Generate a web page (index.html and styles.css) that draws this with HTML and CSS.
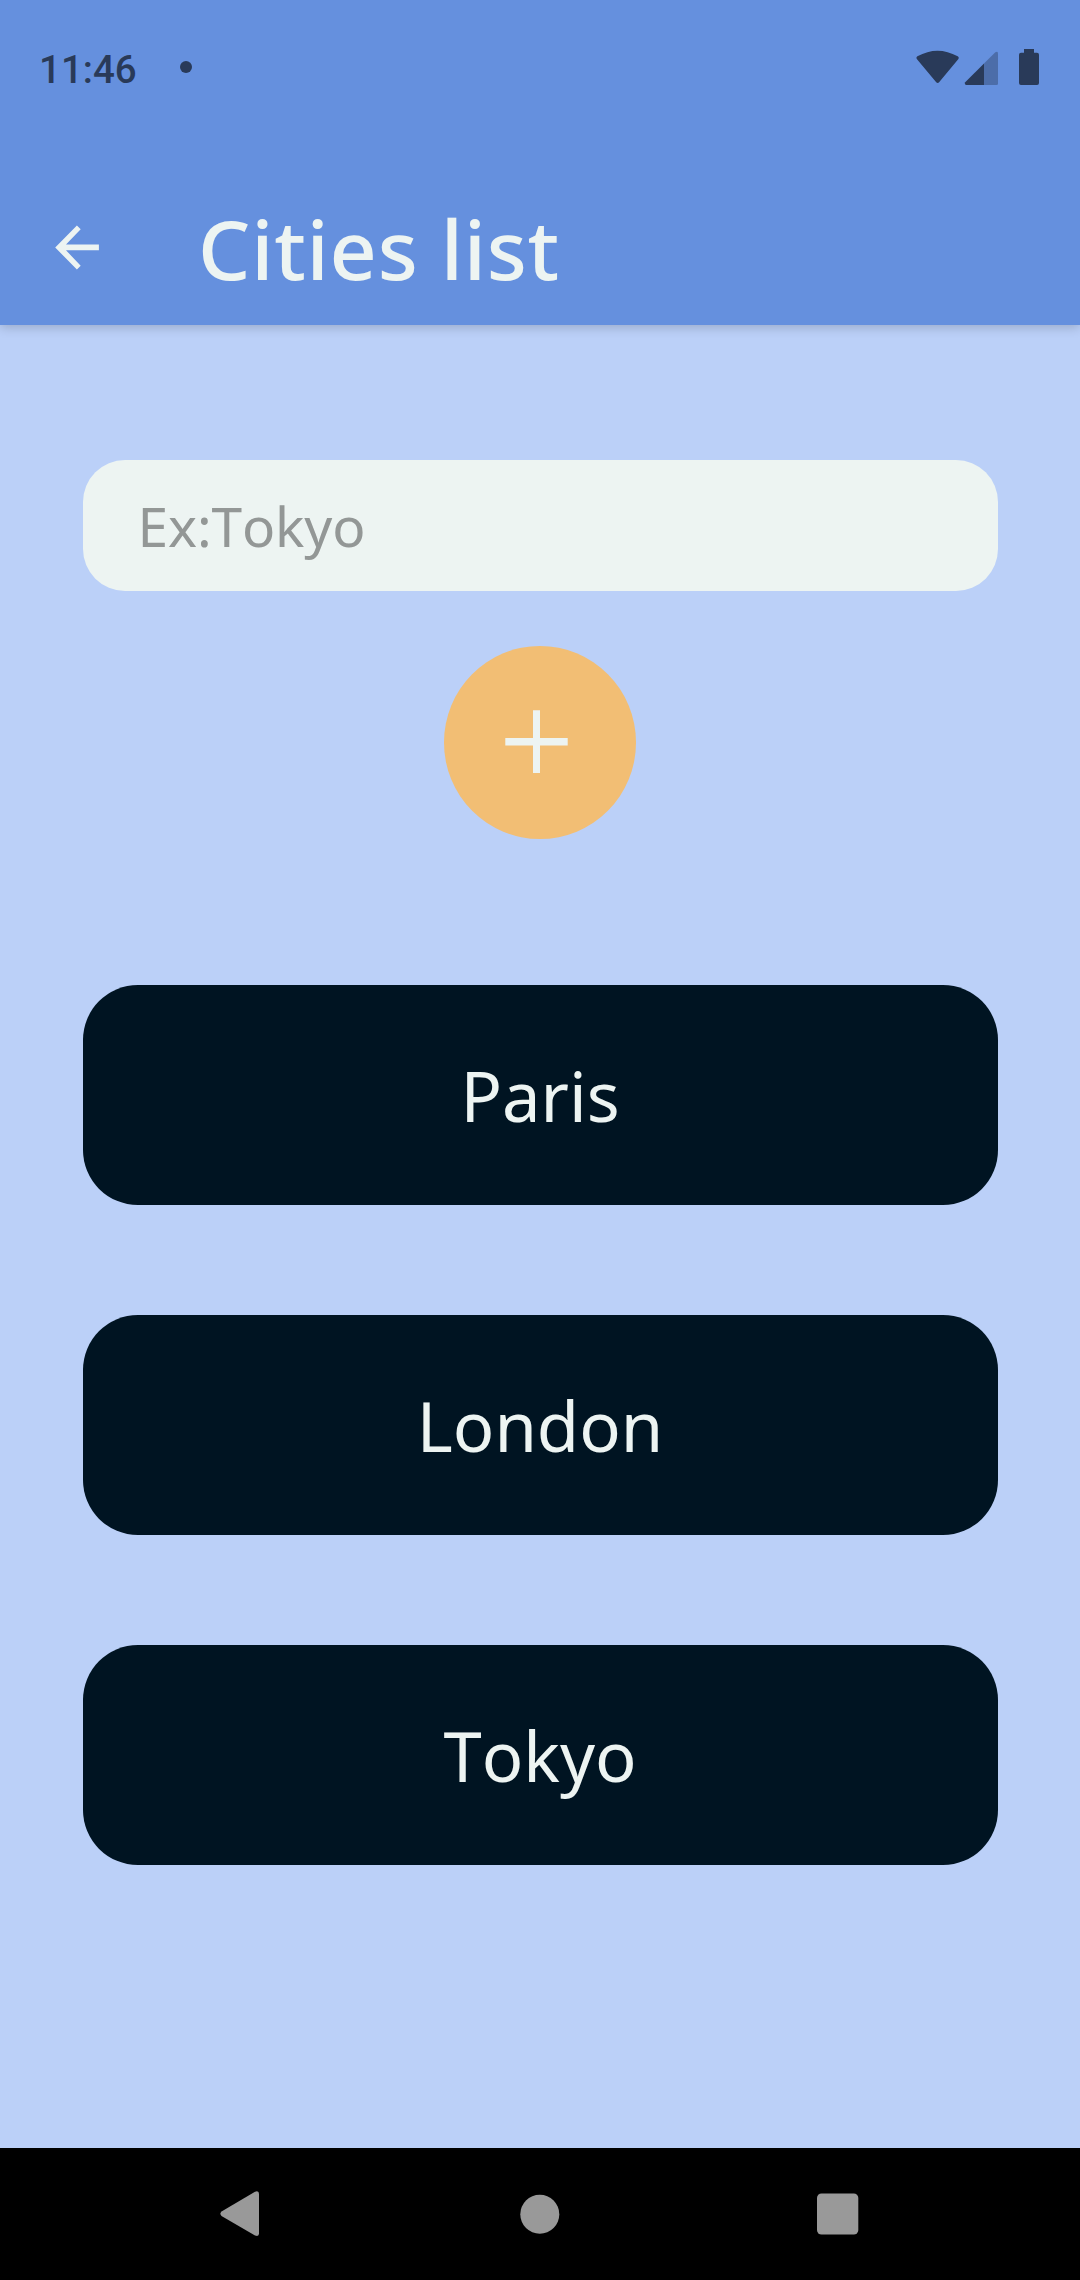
FILE: index.html
```html
<!DOCTYPE html>
<html lang="en">
<head>
<meta charset="utf-8">
<title>Cities list</title>
<link rel="stylesheet" href="styles.css">
</head>
<body>
<div class="screen">
  <header class="header">
    <div class="status">
      <span class="time">11:46</span>
      <span class="dot"></span>
      <svg class="status-icons" width="130" height="44" viewBox="914 46 130 44">
        <path d="M917 59.200Q915.700 57.500 917.400 56.300Q937.500 45 957.700 56.300Q959.500 57.500 958.200 59.200L939.300 82Q937.700 84 936 82Z"/>
        <path d="M984 85V63.500L965.200 82.300Q964 84 965.800 85Z"/>
        <path opacity=".4" d="M984 85V63.500L995.300 52.200Q998 50.600 998 53.500V83.500Q998 85 996.500 85Z"/>
        <path d="M1024 49H1034V52.700H1037Q1039 52.700 1039 54.700V83Q1039 85 1037 85H1021Q1019 85 1019 83V54.700Q1019 52.700 1021 52.700H1024Z"/>
      </svg>
    </div>
    <div class="toolbar">
      <svg class="back" width="44" height="45" viewBox="55 225.500 44 45">
        <path d="M98.900 245.100V250.800H66L80.700 266.200L76.900 270L55.200 248L76.900 226L80.700 229.700L66 245.100Z"/>
      </svg>
      <h1 class="title">Cities list</h1>
    </div>
  </header>
  <main class="content">
    <input class="field" type="text" placeholder="Ex:Tokyo" aria-label="City">
    <button class="add" type="button" aria-label="Add city">
      <svg width="63" height="63" viewBox="0 0 63 63"><path d="M28 .2H35V28H62.700V35.500H35V63H28V35.500H.3V28H28Z"/></svg>
    </button>
    <ul class="cities">
      <li class="city">Paris</li>
      <li class="city">London</li>
      <li class="city">Tokyo</li>
    </ul>
  </main>
  <nav class="navbar">
    <svg width="40" height="46" viewBox="0 0 40 46"><path d="M35 .8Q39 -.8 39 3V42.500Q39 46 35 44.500L1.500 25Q-.8 22.800 1.500 20.500Z"/></svg>
    <svg class="home" width="42" height="42" viewBox="0 0 42 42"><circle cx="21.800" cy="21.300" r="19.500"/></svg>
    <svg width="42" height="42" viewBox="0 0 42 42"><rect y=".5" width="41.300" height="41" rx="4.500"/></svg>
  </nav>
</div>
</body>
</html>
```
FILE: styles.css
```css
* { box-sizing: border-box; }

body {
  margin: 0;
  background: #bbd0f8;
  font-family: "Noto Sans", "Open Sans", sans-serif;
  font-kerning: none;
}

.screen {
  display: flex;
  flex-direction: column;
  width: 1080px;
  height: 2280px;
}

.header {
  height: 325px;
  background: #6590de;
  box-shadow: 0 2px 11px rgba(0, 0, 0, .2);
}

.status {
  display: flex;
  align-items: center;
  height: 136px;
  padding: 0 36px 0 39px;
  color: #293a59;
}

.time {
  width: 141px;
  padding-top: 3px;
  font: 500 38.500px/46px Roboto, sans-serif;
}

.dot {
  width: 12px;
  height: 12px;
  margin-bottom: 2px;
  border-radius: 50%;
  background: currentColor;
}

.status-icons {
  margin-left: auto;
  fill: currentColor;
}

.toolbar {
  display: flex;
  align-items: center;
  height: 189px;
  padding: 35px 55px 0 55px;
  color: #edf4f2;
}

.back {
  margin-top: -1px;
  fill: currentColor;
}

.title {
  margin: 0 0 0 99px;
  font-size: 82.500px;
  font-weight: 500;
  line-height: 112px;
  letter-spacing: .75px;
}

.content {
  display: flex;
  flex: 1;
  flex-direction: column;
  align-items: center;
  padding: 135px 82.500px 0;
}

.field {
  width: 100%;
  height: 131px;
  padding: 0 55px;
  border: 0;
  border-radius: 42px;
  background: #edf4f2;
  color: #001422;
  font: 55px/75px "Noto Sans", sans-serif;
  font-kerning: none;
  letter-spacing: -.15px;
}

.field::placeholder { color: #939796; }

.add {
  display: flex;
  width: 192.500px;
  height: 193px;
  margin-top: 55px;
  padding: 64px 0 0 61px;
  border: 0;
  border-radius: 50%;
  background: #f2be74;
  fill: #edf4f2;
}

.cities {
  display: flex;
  flex-direction: column;
  gap: 110px;
  width: 100%;
  margin: 146px 0 0;
  padding: 0;
  list-style: none;
}

.city {
  display: flex;
  align-items: center;
  justify-content: center;
  height: 220px;
  padding-top: 2px;
  border-radius: 55px;
  background: #001422;
  color: #edf4f2;
  font-size: 68.750px;
  line-height: 94px;
}

.navbar {
  display: flex;
  align-items: center;
  justify-content: space-between;
  height: 132px;
  padding: 0 221px 0 220px;
  background: #000;
  fill: #999;
}
```
